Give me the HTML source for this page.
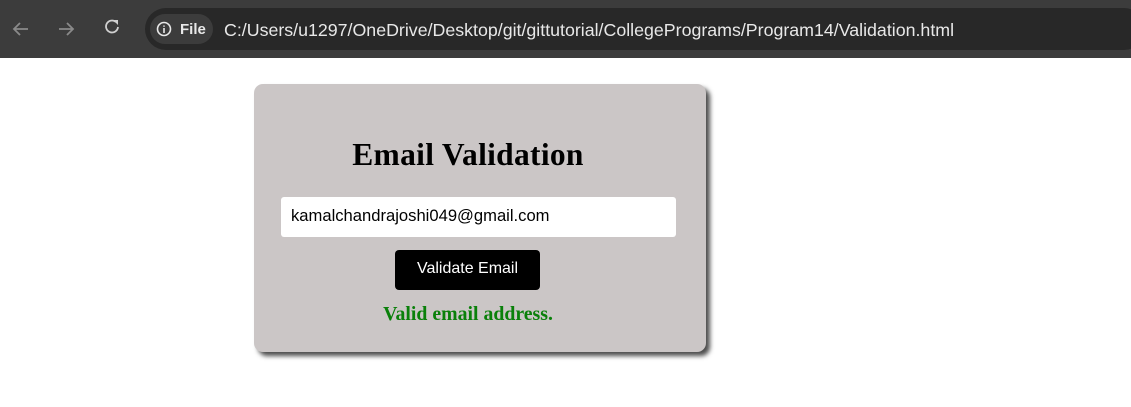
<!DOCTYPE html>
<html><head><style>
body{margin:0;width:1131px;height:407px;background:#fff;position:relative;overflow:hidden;font-family:"Liberation Sans",sans-serif}
.bar{position:absolute;left:0;top:0;width:1131px;height:58px;background:#3c3c3c}
.addr{position:absolute;left:145px;top:8px;width:1000px;height:42px;border-radius:21px;background:#282828}
.chip{position:absolute;left:150px;top:14px;width:63px;height:30px;border-radius:15px;background:#3c3c3c;color:#e8e8e8;font-size:15px;font-weight:bold;line-height:32px}
.url{position:absolute;left:224px;top:20px;color:#e8e8e8;font-size:17.8px}
.card{position:absolute;left:254px;top:84px;width:452px;height:268px;background:#cbc6c6;border-radius:9px;box-shadow:4px 4px 5px rgba(0,0,0,.7)}
h1{position:absolute;width:428px;top:137px;margin:0;text-align:center;font:bold 31.5px "Liberation Serif",serif;left:254px;letter-spacing:0.3px}
.inp{position:absolute;left:281px;top:197px;width:395px;height:40px;background:#fff;border-radius:3px;font-size:16.6px;line-height:38px;box-sizing:border-box;padding-left:10px;color:#000}
.btn{position:absolute;left:395px;top:250px;width:145px;height:40px;background:#000;border-radius:4px;color:#fff;font-size:16px;text-align:center;line-height:38px}
.ok{position:absolute;left:254px;width:428px;top:303px;text-align:center;color:#0a800a;font:bold 19.8px "Liberation Serif",serif}
</style></head><body>
<div class="bar"></div>
<svg style="position:absolute;left:0;top:0" width="140" height="58">
<g stroke="#8a8a8a" stroke-width="1.8" fill="none"><path d="M28 29H14M20 23l-6 6 6 6"/><path d="M59 29h14M67 23l6 6-6 6"/></g>
<path d="M118 27a6 6 0 1 1-2-5" stroke="#d0d0d0" stroke-width="1.8" fill="none"/><path d="M113 20h5v5z" fill="#d0d0d0"/>
</svg>
<div class="addr"></div>
<div class="chip"><svg style="position:absolute;left:6px;top:7px" width="16" height="16"><circle cx="8" cy="8" r="6.5" stroke="#e8e8e8" stroke-width="1.6" fill="none"/><path d="M8 7v5M8 4.5v1.3" stroke="#e8e8e8" stroke-width="1.6"/></svg><span style="position:absolute;left:30px">File</span></div>
<div class="url">C:/Users/u1297/OneDrive/Desktop/git/gittutorial/CollegePrograms/Program14/Validation.html</div>
<div class="card"></div>
<h1>Email Validation</h1>
<div class="inp">kamalchandrajoshi049@gmail.com</div>
<div class="btn">Validate Email</div>
<div class="ok">Valid email address.</div>
</body></html>
